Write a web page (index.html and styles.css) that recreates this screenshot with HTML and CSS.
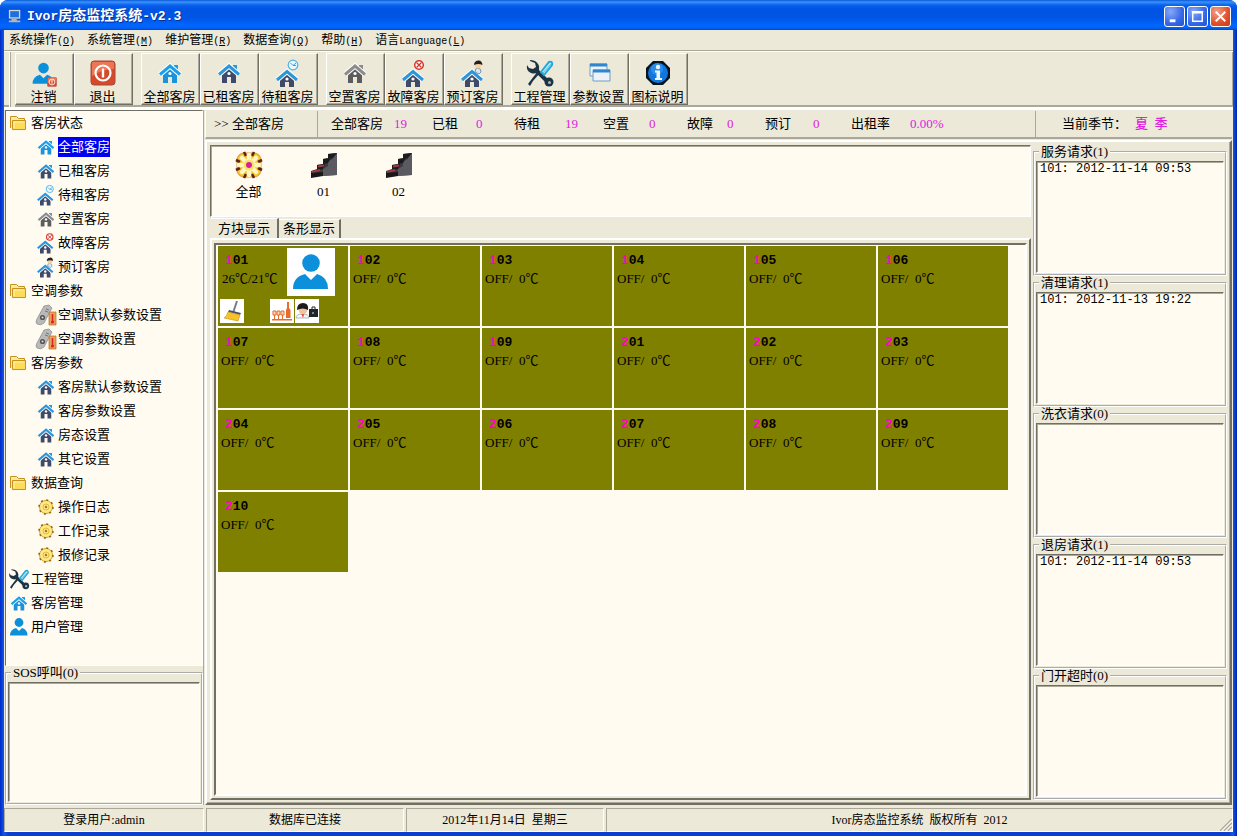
FILE: index.html
```html
<!DOCTYPE html>
<html lang="zh-CN">
<head>
<meta charset="utf-8">
<title>Ivor房态监控系统-v2.3</title>
<link rel="stylesheet" href="styles.css">
</head>
<body>
<svg class="sprites" aria-hidden="true">
  <symbol id="house" viewBox="0 0 32 32">
    <path d="M20 8h4v6h-4z" fill="var(--roof)"/>
    <path d="M9 17l7-6 7 6v9h-5v-6h-4v6H9z" fill="var(--wall)"/>
    <path d="M6 17.5L16 9l10 8.5" fill="none" stroke="#fff" stroke-width="5"/>
    <path d="M6 17.5L16 9l10 8.5" fill="none" stroke="var(--roof)" stroke-width="3"/>
    <circle cx="16" cy="16.5" r="1.6" fill="#fff"/>
  </symbol>
  <symbol id="house-low" viewBox="0 0 32 32">
    <path d="M8 22l7-6 7 6v8h-5v-5h-4v5H8z" fill="var(--wall)"/>
    <path d="M5 23l10-8.5L25 23" fill="none" stroke="#fff" stroke-width="5"/>
    <path d="M5 23l10-8.5L25 23" fill="none" stroke="var(--roof)" stroke-width="3"/>
    <circle cx="15" cy="22" r="1.6" fill="#fff"/>
  </symbol>
  <symbol id="house-wait" viewBox="0 0 32 32">
    <use href="#house-low"/>
    <circle cx="21" cy="8" r="4.8" fill="#eef8ff" stroke="#4bb3e8" stroke-width="1.2"/>
    <path d="M18.500 6l2.500 2.500L24 6M21 8.500h3" fill="none" stroke="#3aa0dd"/>
  </symbol>
  <symbol id="house-fault" viewBox="0 0 32 32">
    <use href="#house-low"/>
    <circle cx="21" cy="8" r="4.300" fill="#fff" stroke="#d8342a" stroke-width="1.500"/>
    <path d="M18.500 5.500l5 5m0-5l-5 5" stroke="#d8342a" stroke-width="1.300"/>
  </symbol>
  <symbol id="house-book" viewBox="0 0 32 32">
    <use href="#house-low"/>
    <path d="M18 15q0-4 3-4t3 4l-2 2z" fill="#d5e6f5" stroke="#7a93a8"/>
    <circle cx="21" cy="8" r="3.400" fill="#f6cfa4"/>
    <path d="M17 8q0-4 4-4.500t4.500 4.500q-4-2-8.500 0z" fill="#222"/>
  </symbol>
  <symbol id="user" viewBox="0 0 48 48">
    <circle cx="24" cy="15" r="8.800" fill="#0d90dc"/>
    <path d="M6 41q0-12 12-15l6 6 6-6q11 3 11 15z" fill="#0d90dc"/>
  </symbol>
  <symbol id="power" viewBox="0 0 26 26">
    <rect x="1" y="1" width="24" height="24" rx="3" fill="#d64a2c" stroke="#a44a37"/>
    <path d="M2 3q0-1 1-1h20q1 0 1 1v6Q13 9 2 16z" fill="#ec7655"/>
    <circle cx="13" cy="13" r="7.500" fill="none" stroke="#fff" stroke-width="2.200"/>
    <path d="M13 8.500v9" stroke="#fff" stroke-width="2.400"/>
  </symbol>
  <symbol id="logout" viewBox="0 0 32 32">
    <use href="#user" x="1" y="2" width="29" height="29"/>
    <use href="#power" x="19" y="20" width="10" height="10"/>
  </symbol>
  <symbol id="tools" viewBox="0 0 32 32">
    <path d="M11 12l12 12" stroke="#1d3344" stroke-width="4"/>
    <circle cx="25" cy="25" r="4.500" fill="#1d3344"/><circle cx="25.500" cy="25.500" r="1.500" fill="#9bb"/>
    <path d="M6 4l5 2 1 4-3 2-4-1-2-3q-1 6 4 8 6 2 8-3 1-6-4-9-3-1-5-1z" fill="#1d3344"/>
    <path d="M16 16l-7 8-3 5-2-2 3-4 7-9z" fill="#1d3344"/>
    <path d="M17 15L25 5q4-1 3 3L20 18z" fill="#bdeafa" stroke="#25a7d8" stroke-width="2"/>
    <path d="M19 16L27 7" stroke="#5fc3e6"/>
  </symbol>
  <symbol id="windows" viewBox="0 0 32 32">
    <path d="M7 7h17v12H7z" fill="#edf2f6" stroke="#6fa0c8"/><path d="M7 6.500h17v3H7z" fill="#2f87cf"/>
    <path d="M10 13h17v11H10z" fill="#edf2f6" stroke="#6fa0c8"/><path d="M10 12.500h17v3H10z" fill="#2f87cf"/>
  </symbol>
  <symbol id="info" viewBox="0 0 32 32">
    <path d="M11 4h10l7 7v10l-7 7H11l-7-7V11z" fill="#07131f"/>
    <circle cx="16" cy="16" r="10" fill="#1277dc"/><circle cx="15" cy="12" r="6" fill="#3d9cf1" opacity=".6"/>
    <circle cx="16" cy="10" r="2.200" fill="#eaf6ff"/><path d="M13 13.500h5V21h2v2h-7v-2h1.500v-5.500H13z" fill="#eaf6ff"/>
  </symbol>
  <symbol id="folder" viewBox="0 0 24 24">
    <path d="M3.500 17V5.500h6l2 2h6V10" fill="#ffe99a" stroke="#c8921e"/>
    <path d="M5.500 18.500v-9h13v9z" fill="#ffdc58" stroke="#c8921e"/>
    <path d="M7 11h10M7 11v6" stroke="#fff3b0"/>
  </symbol>
  <symbol id="remote" viewBox="0 0 24 24">
    <path d="M10 3l5-1 3 3-8 15q-3 3-7 1-2-2 0-5z" fill="#b9b9b9" stroke="#888" stroke-width=".7"/>
    <circle cx="8.500" cy="14.500" r="2.600" fill="#555"/><circle cx="8.500" cy="14.500" r="1" fill="#ddd"/>
    <path d="M12 6l3 1m-4 1l3 1" stroke="#777"/>
    <path d="M15 9h7v13h-7z" fill="#e6a15a" stroke="#bb6b2b" stroke-width=".7"/>
    <path d="M18.500 11v7" stroke="#d9251c" stroke-width="1.500"/><circle cx="18.500" cy="19" r="1.600" fill="#d9251c"/>
  </symbol>
  <symbol id="gear" viewBox="0 0 24 24">
    <circle cx="12" cy="12" r="6.500" fill="#ffe887" stroke="#d9a520"/>
    <circle cx="12" cy="12" r="7" fill="none" stroke="#8a641c" stroke-width="1.500" stroke-dasharray="2 3.500"/>
    <circle cx="12" cy="12" r="3" fill="none" stroke="#e2b83a"/><circle cx="12" cy="12" r="1.200" fill="#a3721a"/>
  </symbol>
  <symbol id="flower" viewBox="0 0 28 28">
    <rect x="2" y="2" width="24" height="24" rx="7" fill="#f5c52a" stroke="#e0913c"/>
    <path d="M9 1l2 4M17 5l2-4M27 9l-4 2M23 17l4 2M19 27l-2-4M11 23l-2 4M1 19l4-2M5 11L1 9" stroke="#5d2419" stroke-width="2.600"/>
    <path d="M14 4v20M4 14h20M7 7l14 14M21 7L7 21" stroke="#fff7c2" stroke-width="4.500" stroke-linecap="round"/>
    <circle cx="14" cy="14" r="5.500" fill="#fbe46a"/><circle cx="14" cy="14" r="3" fill="#d3229b"/>
  </symbol>
  <symbol id="stairs" viewBox="0 0 28 28">
    <path d="M27 2v22l-17 1-9 1v-6l6-2v-4l6-1V8l5-1V3z" fill="#3b3b40"/>
    <path d="M27 2v22l-14 1V18l5-3v-5l5-2V3z" fill="#5a5a60"/>
    <path d="M18 3l9-1-4 5-5 1zM13 8l8-1-3 5-5 1zM7 14l8-1-2 5-6 1z" fill="#1c1c1f"/>
    <path d="M2 21l8-2M8 15.500l6-1" stroke="#a33a40" stroke-width="2"/>
    <path d="M1 22l12-1v4L1 27z" fill="#18181a"/>
  </symbol>
  <symbol id="broom" viewBox="0 0 24 24">
    <path d="M17 2l-4 12" stroke="#777b8c" stroke-width="2"/>
    <path d="M9 11l12 3-1 2L8 13z" fill="#4d5268"/>
    <path d="M8 13l12 3-2 6-14-3q3-2 4-6z" fill="#f5c32c" stroke="#d69a1c" stroke-width=".7"/>
  </symbol>
  <symbol id="drinks" viewBox="0 0 24 24">
    <path d="M2 20h20v1.500H2zM16 19v-8l1-2V3h2v6l1.500 2v8z" fill="#e86b28"/>
    <path d="M3 12h3v4H3zM7 12h3v4H7zM11 12h3v4h-3z" fill="#fbd9c4" stroke="#e86b28"/>
    <path d="M4.500 16v4M8.500 16v4M12.500 16v4" stroke="#e86b28"/>
  </symbol>
  <symbol id="guest" viewBox="0 0 24 24">
    <path d="M1 19q0-4 6-4 7 0 7 4z" fill="#f3f6fa" stroke="#999" stroke-width=".7"/>
    <path d="M6.500 15l1.500 4 1-4z" fill="#d33"/>
    <circle cx="8" cy="11" r="4.300" fill="#f3c39a"/>
    <path d="M2 11q0-7 6-7t5 7q-5-3-11 0z" fill="#1c1c1c"/>
    <path d="M14 10h9v8h-9z" fill="#20242a"/><path d="M17 10V8h3v2" fill="none" stroke="#20242a"/><circle cx="18" cy="14" r="1" fill="#9aa"/>
  </symbol>
  <symbol id="computer" viewBox="0 0 16 16">
    <path d="M1 1h13v10H1z" fill="#d9d6c8"/><path d="M2.500 2.500h10v7h-10z" fill="#1d6fe0"/><path d="M4 11h6v2h4v2H1v-2h3z" fill="#b9b6a8"/>
  </symbol>
</svg>

<div class="window">
  <header class="titlebar">
    <svg class="app-icon"><use href="#computer"/></svg>
    <h1><span>Ivor</span>房态监控系统<span>-v2.3</span></h1>
    <div class="window-buttons">
      <button type="button" aria-label="最小化"><svg viewBox="0 0 20 20"><path d="M5 13h6v3H5z" fill="#fff"/></svg></button>
      <button type="button" aria-label="最大化"><svg viewBox="0 0 20 20"><path d="M5 6h10v9H5zM4 5h12" fill="none" stroke="#fff" stroke-width="1.500"/></svg></button>
      <button type="button" class="close" aria-label="关闭"><svg viewBox="0 0 20 20"><path d="M5 5l10 10M15 5L5 15" stroke="#fff" stroke-width="2"/></svg></button>
    </div>
  </header>

  <nav class="menubar">
    <button type="button">系统操作<span>(<u>O</u>)</span></button>
    <button type="button">系统管理<span>(<u>M</u>)</span></button>
    <button type="button">维护管理<span>(<u>R</u>)</span></button>
    <button type="button">数据查询<span>(<u>Q</u>)</span></button>
    <button type="button">帮助<span>(<u>H</u>)</span></button>
    <button type="button">语言<span>Language(<u>L</u>)</span></button>
  </nav>

  <div class="toolbar">
    <div class="tool-group">
      <button type="button"><svg><use href="#logout"/></svg>注销</button>
      <button type="button"><svg class="inset-icon"><use href="#power"/></svg>退出</button>
    </div>
    <div class="tool-group">
      <button type="button"><svg class="bright"><use href="#house"/></svg>全部客房</button>
      <button type="button"><svg><use href="#house"/></svg>已租客房</button>
      <button type="button"><svg><use href="#house-wait"/></svg>待租客房</button>
    </div>
    <div class="tool-group">
      <button type="button"><svg class="gray"><use href="#house"/></svg>空置客房</button>
      <button type="button"><svg><use href="#house-fault"/></svg>故障客房</button>
      <button type="button"><svg><use href="#house-book"/></svg>预订客房</button>
    </div>
    <div class="tool-group">
      <button type="button"><svg><use href="#tools"/></svg>工程管理</button>
      <button type="button"><svg><use href="#windows"/></svg>参数设置</button>
      <button type="button"><svg><use href="#info"/></svg>图标说明</button>
    </div>
  </div>

  <div class="workspace">
    <aside class="sidebar">
      <nav class="tree">
        <ul>
          <li><a href="#"><svg><use href="#folder"/></svg><span>客房状态</span></a>
            <ul>
              <li><a href="#" class="selected"><svg class="bright"><use href="#house"/></svg><span>全部客房</span></a></li>
              <li><a href="#"><svg><use href="#house"/></svg><span>已租客房</span></a></li>
              <li><a href="#"><svg><use href="#house-wait"/></svg><span>待租客房</span></a></li>
              <li><a href="#"><svg class="gray"><use href="#house"/></svg><span>空置客房</span></a></li>
              <li><a href="#"><svg><use href="#house-fault"/></svg><span>故障客房</span></a></li>
              <li><a href="#"><svg><use href="#house-book"/></svg><span>预订客房</span></a></li>
            </ul>
          </li>
          <li><a href="#"><svg><use href="#folder"/></svg><span>空调参数</span></a>
            <ul>
              <li><a href="#"><svg><use href="#remote"/></svg><span>空调默认参数设置</span></a></li>
              <li><a href="#"><svg><use href="#remote"/></svg><span>空调参数设置</span></a></li>
            </ul>
          </li>
          <li><a href="#"><svg><use href="#folder"/></svg><span>客房参数</span></a>
            <ul>
              <li><a href="#"><svg><use href="#house"/></svg><span>客房默认参数设置</span></a></li>
              <li><a href="#"><svg><use href="#house"/></svg><span>客房参数设置</span></a></li>
              <li><a href="#"><svg><use href="#house"/></svg><span>房态设置</span></a></li>
              <li><a href="#"><svg><use href="#house"/></svg><span>其它设置</span></a></li>
            </ul>
          </li>
          <li><a href="#"><svg><use href="#folder"/></svg><span>数据查询</span></a>
            <ul>
              <li><a href="#"><svg><use href="#gear"/></svg><span>操作日志</span></a></li>
              <li><a href="#"><svg><use href="#gear"/></svg><span>工作记录</span></a></li>
              <li><a href="#"><svg><use href="#gear"/></svg><span>报修记录</span></a></li>
            </ul>
          </li>
          <li><a href="#"><svg><use href="#tools"/></svg><span>工程管理</span></a></li>
          <li><a href="#"><svg class="bright"><use href="#house"/></svg><span>客房管理</span></a></li>
          <li><a href="#"><svg><use href="#user"/></svg><span>用户管理</span></a></li>
        </ul>
      </nav>
      <fieldset class="group sos">
        <legend>SOS呼叫(0)</legend>
        <ul class="listbox"></ul>
      </fieldset>
    </aside>

    <main class="main">
      <div class="infobar">
        <div class="crumb">&gt;&gt; 全部客房</div>
        <dl class="stats">
          <dt>全部客房</dt><dd>19</dd>
          <dt>已租</dt><dd>0</dd>
          <dt>待租</dt><dd>19</dd>
          <dt>空置</dt><dd>0</dd>
          <dt>故障</dt><dd>0</dd>
          <dt>预订</dt><dd>0</dd>
          <dt>出租率</dt><dd>0.00%</dd>
        </dl>
        <div class="season">当前季节：<strong>夏&nbsp; 季</strong></div>
      </div>

      <div class="panel">
        <div class="rooms-side">
          <div class="floors">
            <button type="button"><svg><use href="#flower"/></svg>全部</button>
            <button type="button"><svg><use href="#stairs"/></svg>01</button>
            <button type="button"><svg><use href="#stairs"/></svg>02</button>
          </div>
          <div class="tabs" role="tablist">
            <button type="button" role="tab" aria-selected="true">方块显示</button>
            <button type="button" role="tab" aria-selected="false">条形显示</button>
          </div>
          <div class="tab-page">
            <ul class="tiles">
              <li class="tile occupied">
                <b><i>1</i>01</b><p>26℃/21℃</p>
                <svg class="person"><use href="#user"/></svg>
                <div class="flags">
                  <svg><use href="#broom"/></svg>
                  <svg class="slot-three"><use href="#drinks"/></svg>
                  <svg><use href="#guest"/></svg>
                </div>
              </li>
              <li class="tile"><b><i>1</i>02</b><p>OFF/&nbsp; 0℃</p></li>
              <li class="tile"><b><i>1</i>03</b><p>OFF/&nbsp; 0℃</p></li>
              <li class="tile"><b><i>1</i>04</b><p>OFF/&nbsp; 0℃</p></li>
              <li class="tile"><b><i>1</i>05</b><p>OFF/&nbsp; 0℃</p></li>
              <li class="tile"><b><i>1</i>06</b><p>OFF/&nbsp; 0℃</p></li>
              <li class="tile"><b><i>1</i>07</b><p>OFF/&nbsp; 0℃</p></li>
              <li class="tile"><b><i>1</i>08</b><p>OFF/&nbsp; 0℃</p></li>
              <li class="tile"><b><i>1</i>09</b><p>OFF/&nbsp; 0℃</p></li>
              <li class="tile"><b><i>2</i>01</b><p>OFF/&nbsp; 0℃</p></li>
              <li class="tile"><b><i>2</i>02</b><p>OFF/&nbsp; 0℃</p></li>
              <li class="tile"><b><i>2</i>03</b><p>OFF/&nbsp; 0℃</p></li>
              <li class="tile"><b><i>2</i>04</b><p>OFF/&nbsp; 0℃</p></li>
              <li class="tile"><b><i>2</i>05</b><p>OFF/&nbsp; 0℃</p></li>
              <li class="tile"><b><i>2</i>06</b><p>OFF/&nbsp; 0℃</p></li>
              <li class="tile"><b><i>2</i>07</b><p>OFF/&nbsp; 0℃</p></li>
              <li class="tile"><b><i>2</i>08</b><p>OFF/&nbsp; 0℃</p></li>
              <li class="tile"><b><i>2</i>09</b><p>OFF/&nbsp; 0℃</p></li>
              <li class="tile"><b><i>2</i>10</b><p>OFF/&nbsp; 0℃</p></li>
            </ul>
          </div>
        </div>

        <div class="requests">
          <fieldset class="group"><legend>服务请求(1)</legend><ul class="listbox"><li>101: 2012-11-14 09:53</li></ul></fieldset>
          <fieldset class="group"><legend>清理请求(1)</legend><ul class="listbox"><li>101: 2012-11-13 19:22</li></ul></fieldset>
          <fieldset class="group"><legend>洗衣请求(0)</legend><ul class="listbox"></ul></fieldset>
          <fieldset class="group"><legend>退房请求(1)</legend><ul class="listbox"><li>101: 2012-11-14 09:53</li></ul></fieldset>
          <fieldset class="group"><legend>门开超时(0)</legend><ul class="listbox"></ul></fieldset>
        </div>
      </div>
    </main>
  </div>

  <footer class="statusbar">
    <div>登录用户:admin</div>
    <div>数据库已连接</div>
    <div>2012年11月14日&nbsp; 星期三</div>
    <div class="grip">Ivor房态监控系统&nbsp; 版权所有&nbsp; 2012
      <svg viewBox="0 0 12 12" aria-hidden="true"><path d="M0 12L12 0M4 12l8-8M8 12l4-4" stroke="#aca899" stroke-width="1.500"/><path d="M1.500 12L12 1.500M5.500 12L12 5.500M9.500 12L12 9.500" stroke="#fff"/></svg>
    </div>
  </footer>
</div>
</body>
</html>
```
FILE: styles.css
```css
:root {
  --face: #ece9d8;
  --paper: #fffbf0;
  --shadow: #aca899;
  --dark: #716f64;
  --magenta: #e020e0;
  --roof: #2c96d8;
  --wall: #3f4a6b;
}

* { box-sizing: border-box; }

body {
  margin: 0;
  padding-right: 8px;
  background: #fff;
  color: #000;
  font: 13px/16px "Liberation Serif", "Noto Sans CJK SC", serif;
}

button {
  padding: 0;
  border: 0;
  background: none;
  color: inherit;
  font: inherit;
}

ul, dl, dd, p { margin: 0; padding: 0; list-style: none; }

.sprites { position: absolute; width: 0; height: 0; }
.bright { --roof: #1ba0e8; --wall: #1b93dc; }
.gray { --roof: #8c8c8c; --wall: #5c5c5c; }

.window {
  display: flex;
  flex-direction: column;
  min-height: 100vh;
  padding: 0 4px 4px;
  border-radius: 8px 8px 0 0;
  background: linear-gradient(90deg, #0029c8, #1158e8 4px, #0c3fd0 8px, #0c3fd0 calc(100% - 8px), #1158e8 calc(100% - 4px), #0023b0);
}

/* Title bar */
.titlebar {
  display: flex;
  align-items: center;
  height: 30px;
  margin: 0 -4px;
  padding: 2px 6px 0 8px;
  border-radius: 8px 8px 0 0;
  background: linear-gradient(#0a5ad8, #3a92fb 2px, #0a62ee 5px, #0054e3 9px, #0055e5 18px, #0066ff 25px, #0063f8 28px, #0046c8);
  color: #fff;
}
.app-icon { width: 14px; height: 14px; margin-right: 5px; }
.titlebar h1 {
  flex: 1;
  margin: 0;
  font: bold 14px/20px "Liberation Mono", "Noto Sans CJK SC", monospace;
  text-shadow: 1px 1px #0a2f90;
}
.titlebar h1 span { font-size: 13px; }
.window-buttons { display: flex; gap: 2px; }
.window-buttons button {
  width: 21px;
  height: 21px;
  border: 1px solid #fff;
  border-radius: 3px;
  background: radial-gradient(circle at 30% 25%, #86a8fa, #3567e6 60%, #2453cc);
}
.window-buttons .close { background: radial-gradient(circle at 30% 25%, #f0a089, #e0502c 60%, #c83a14); }
.window-buttons svg { display: block; width: 19px; height: 19px; }

/* Menu */
.menubar {
  display: flex;
  gap: 12px;
  height: 20px;
  padding: 2px 0 0 5px;
  background: var(--face);
  font-size: 12px;
}
.menubar span { font-family: "Liberation Mono", monospace; font-size: 10px; }

/* Toolbar */
.toolbar {
  display: flex;
  gap: 8px;
  height: 60px;
  padding: 1px 0 0 11px;
  border-top: 1px solid var(--shadow);
  border-bottom: 3px solid #fff;
  background: var(--face);
  box-shadow: inset 0 1px #fff, inset -1px 0 var(--shadow), inset 0 -2px var(--shadow);
}
.tool-group { display: flex; padding: 1px 0 2px; }
.tool-group:first-child { box-shadow: -4px 0 var(--face), -5px 0 var(--shadow), -6px 0 #fff; }
.tool-group button {
  display: flex;
  flex-direction: column;
  align-items: center;
  width: 59px;
  padding: 3px 2px 0 0;
  border: 1px solid;
  border-color: #fff var(--dark) var(--dark) #fff;
  box-shadow: inset -1px -1px var(--shadow);
  white-space: nowrap;
}
.tool-group svg { flex: none; width: 32px; height: 32px; }
.tool-group .inset-icon { padding: 3px; }

/* Work area */
.workspace { display: flex; flex: 1; background: var(--face); }
.sidebar { display: flex; flex-direction: column; width: 200px; padding-left: 1px; border-right: 1px solid var(--shadow); }
.tree {
  flex: 1;
  padding-left: 1px;
  border: 1px solid;
  border-color: var(--dark) #fff #fff var(--dark);
  background: var(--paper);
}
.tree a {
  display: flex;
  align-items: center;
  height: 24px;
  color: #000;
  text-decoration: none;
}
.tree svg { width: 24px; height: 24px; }
.tree li li { padding-left: 27px; }
.tree a.selected span { background: #0000f0; color: #fff; line-height: 20px; }

.group {
  display: flex;
  flex: 1;
  min-width: 0;
  margin: 0;
  padding: 3px 1px 1px;
  border: 2px groove #fff;
}
.group legend { margin-left: 3px; padding: 0 2px; line-height: 13px; }
.listbox {
  flex: 1;
  border: 1px solid;
  border-color: var(--dark) #fff #fff var(--dark);
  background: var(--paper);
  box-shadow: inset 1px 1px var(--shadow);
}
.listbox li { padding-left: 3px; font: 12px/14px "Liberation Mono", monospace; }
.sos { flex: 0 0 139px; }

.main { display: flex; flex: 1; flex-direction: column; min-width: 0; padding: 1px 1px 0; }

.infobar {
  display: flex;
  align-items: stretch;
  height: 28px;
  border-bottom: 2px solid var(--shadow);
  border-left: 1px solid #fff;
  line-height: 26px;
}
.crumb { width: 112px; padding-left: 8px; border-right: 1px solid var(--shadow); }
.stats {
  display: grid;
  flex: 1;
  grid-template-columns: 63px 38px 44px 38px 51px 38px 46px 38px 40px 38px 48px 38px 59px auto;
  justify-content: start;
  padding-left: 13px;
}
.stats dd, .season strong { color: var(--magenta); }
.season { width: 197px; padding-left: 26px; border-left: 1px solid var(--shadow); }
.season strong { margin-left: 8px; font-weight: 500; }

.panel {
  display: flex;
  flex: 1;
  gap: 2px;
  margin-top: 1px;
  padding: 3px;
  border: 2px solid;
  border-color: #fff var(--dark) var(--dark) #fff;
  box-shadow: inset -1px -1px var(--shadow);
}
.rooms-side { display: flex; flex: 1; flex-direction: column; min-width: 0; }
.floors {
  display: flex;
  height: 72px;
  padding-top: 5px;
  border: 1px solid;
  border-color: var(--dark) #fff #fff var(--dark);
  background: var(--paper);
  box-shadow: inset 1px 1px var(--shadow);
}
.floors button { display: flex; flex-direction: column; align-items: center; gap: 5px; width: 75px; }
.floors svg { width: 28px; height: 28px; }

.tabs { display: flex; height: 20px; margin-top: 1px; padding-left: 1px; }
.tabs button {
  margin-top: 1px;
  padding: 0 4px;
  border-top: 1px solid #fff;
  border-right: 2px solid var(--dark);
  line-height: 18px;
}
.tabs [aria-selected="true"] { margin-top: 0; padding: 0 7px; line-height: 17px; }

.tab-page {
  display: flex;
  flex: 1;
  padding: 3px 2px 2px;
  border: 2px solid;
  border-color: #fff var(--dark) var(--dark) #fff;
}
.tiles {
  display: grid;
  flex: 1;
  grid-template-columns: repeat(auto-fill, 130px);
  grid-auto-rows: 80px;
  gap: 2px;
  align-content: start;
  padding: 1px 2px;
  border: 2px solid;
  border-color: var(--dark) #fff #fff var(--dark);
  background: var(--paper);
}
.tile {
  display: grid;
  grid-template-columns: 1fr;
  grid-template-rows: 19px 20px 24px;
  align-content: start;
  padding: 5px 3px 2px;
  background: #808000;
}
.tile b { padding-left: 4px; font: bold 13px/19px "Liberation Mono", monospace; }
.tile i { color: #f0c; font-style: normal; }
.tile p { line-height: 18px; white-space: nowrap; }
.occupied {
  grid-template-columns: 1fr 48px;
  grid-template-rows: 22px 20px 9px 24px;
  padding: 2px 13px 2px 2px;
}
.occupied b { padding: 3px 0 0 5px; }
.occupied p { grid-row: 2; padding-left: 2px; }
.tile svg { background: #fff; }
.person { grid-area: 1 / 2 / 4 / 3; width: 48px; height: 48px; }
.flags {
  display: grid;
  grid-area: 4 / 1 / 5 / 3;
  grid-template-columns: repeat(4, 24px);
  gap: 1px;
}
.flags svg { width: 24px; height: 24px; }
.slot-three { grid-column: 3; }

.requests { display: flex; flex-direction: column; width: 194px; }

/* Status bar */
.statusbar {
  display: grid;
  grid-template-columns: 200px 198px 198px 1fr;
  gap: 2px;
  height: 27px;
  padding-top: 3px;
  background: var(--face);
  font-size: 12px;
  line-height: 22px;
  text-align: center;
}
.statusbar div { border: 1px solid; border-color: var(--shadow) #fff #fff var(--shadow); }
.grip { position: relative; }
.grip svg { position: absolute; right: 0; bottom: 0; width: 12px; height: 12px; }
```
